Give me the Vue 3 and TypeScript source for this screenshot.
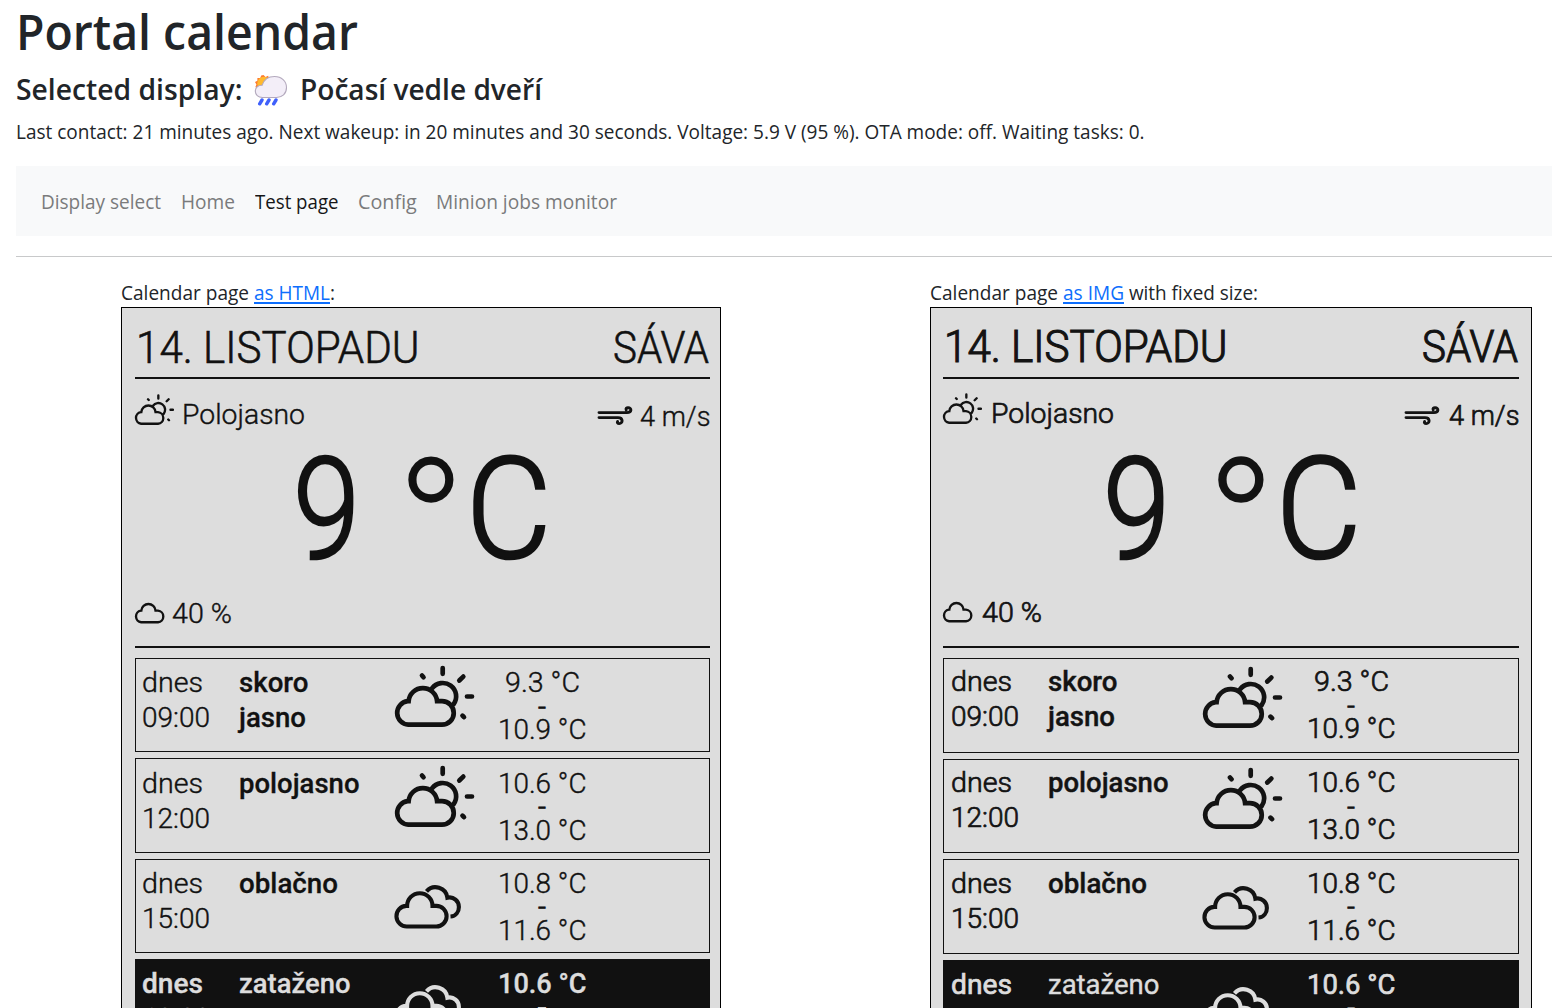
<script setup lang="ts">
import type { Directive } from 'vue'

// Sets a run of text to a given advance width.
const fit = (el: HTMLElement, width: number) => {
  el.style.display = 'inline-block'
  el.style.whiteSpace = 'pre'
  el.style.width = 'auto'
  el.style.transform = 'none'
  const natural = el.getBoundingClientRect().width
  el.style.width = `${width}px`
  el.style.transformOrigin = '0 50%'
  el.style.transform = `scaleX(${width / natural})`
}
const vFit: Directive<HTMLElement, number> = {
  mounted: (el, { value }) => fit(el, value),
}

const nav = [
  { label: 'Display select', width: 120, active: false },
  { label: 'Home', width: 54, active: false },
  { label: 'Test page', width: 83.5, active: true },
  { label: 'Config', width: 58.8, active: false },
  { label: 'Minion jobs monitor', width: 181, active: false },
]

interface Word { text: string; width: number }
interface Forecast {
  time: string
  summary: Word[]
  icon: 'sun' | 'clouds'
  low: Word
  high: Word
  now?: boolean
}
const forecast: Forecast[] = [
  { time: '09:00', summary: [{ text: 'skoro', width: 69.5 }, { text: 'jasno', width: 67 }], icon: 'sun', low: { text: '9.3 °C', width: 75 }, high: { text: '10.9 °C', width: 88.5 } },
  { time: '12:00', summary: [{ text: 'polojasno', width: 120.5 }], icon: 'sun', low: { text: '10.6 °C', width: 88.5 }, high: { text: '13.0 °C', width: 88.5 } },
  { time: '15:00', summary: [{ text: 'oblačno', width: 99 }], icon: 'clouds', low: { text: '10.8 °C', width: 88.5 }, high: { text: '11.6 °C', width: 88.5 } },
  { time: '18:00', summary: [{ text: 'zataženo', width: 111.5 }], icon: 'clouds', low: { text: '10.6 °C', width: 88.5 }, high: { text: '10.9 °C', width: 88.5 }, now: true },
]

const panels = [
  { kind: 'html', link: 'as HTML', linkWidth: 76, tail: ':', tailWidth: 5 },
  { kind: 'img', link: 'as IMG', linkWidth: 61, tail: ' with fixed size:', tailWidth: 134 },
]
</script>

<template>
  <main class="page">
    <h1><span v-fit="342">Portal calendar</span></h1>
    <h2>
      <span v-fit="226.500">Selected display:</span>
      <svg class="emoji" viewBox="0 0 34 32">
        <path fill="#fd7b2f" d="M9.5 1l2 2 2.6-1.2 1 2.6 3-.2-.4 3 2 2-2 8H5L3.500 14.600 1.400 13l1-2.500L1 8l2.400-1.300L3.400 4l2.800.1L7.200 1.500z" />
        <circle cx="10" cy="9.500" r="6.800" fill="#ffb92e" />
        <path fill="#f3eef8" stroke="#b3a9bd" stroke-width="1.100" d="M8.500 23.500C4 23.500 1.300 20.500 1.300 17S4 11 8.200 11.200C10 5.500 14.500 2.500 20.500 2.500 27.500 2.500 32.500 7 32.500 13.500S28 23.500 22.500 23.500Z" />
        <path stroke="#3f60fb" stroke-width="3.400" stroke-linecap="round" d="M8 26l-2.300 3.800M15 26l-2.300 3.800M22 26l-2.300 3.800" />
      </svg>
      <span v-fit="242">Počasí vedle dveří</span>
    </h2>
    <p class="status"><span v-fit="1128.500">Last contact: 21 minutes ago. Next wakeup: in 20 minutes and 30 seconds. Voltage: 5.9 V (95 %). OTA mode: off. Waiting tasks: 0.</span></p>
    <nav class="nav">
      <a v-for="n in nav" :key="n.label" v-fit="n.width" :class="{ active: n.active }">{{ n.label }}</a>
    </nav>
    <hr />
    <div class="panels">
      <section v-for="p in panels" :key="p.kind" :class="['panel', p.kind]">
        <div class="caption"><span v-fit="133">Calendar page </span><a v-fit="p.linkWidth">{{ p.link }}</a><span v-fit="p.tailWidth">{{ p.tail }}</span></div>
        <div class="calendar">
          <header class="date">
            <span v-fit="283.500">14. LISTOPADU</span><span v-fit="96">SÁVA</span>
          </header>
          <div class="current">
            <div class="conditions">
              <div class="sky">
                <svg class="sun-small" viewBox="2 2 80 62">
                  <path d="M16.300 61.500A11.800 11.800 0 0 1 15.600 38.200h1A14.300 14.300 0 0 1 45.100 38.200H50a11.700 11.700 0 0 1 0 23.300ZM40 25.400A13.400 13.400 0 0 1 61.500 41.400M50.700 5v6M67.300 16.500l4-4M75 33.500h5M70.500 53l1.500 1.500M30 12.500l1.500 1.500" />
                </svg>
                <span v-fit="123">Polojasno</span>
              </div>
              <div class="wind">
                <svg viewBox="0 0 38 22">
                  <path d="M3 8.600H31C36 8.600 36 3.800 32 3.600c-1.500 0-2.400 1-1.800 2.200M3 13.600H22c5.500 0 5 6 1.200 6-1.600 0-2.200-1.200-1.600-2.200" />
                </svg>
                <span v-fit="70.500">4 m/s</span>
              </div>
            </div>
            <div class="temperature"><span v-fit="67">9</span><span class="degree" v-fit="70">°</span><span v-fit="85.500">C</span></div>
            <div class="clouds">
              <svg viewBox="2 21 62 43">
                <path d="M16.300 61.500A11.800 11.800 0 0 1 15.600 38.200h1A14.300 14.300 0 0 1 45.100 38.200H50a11.700 11.700 0 0 1 0 23.300Z" />
              </svg>
              <span v-fit="60">40 %</span>
            </div>
          </div>
          <div class="rows">
            <article v-for="f in forecast" :key="f.time" :class="['row', { now: f.now }]">
              <div class="when"><span v-fit="61">dnes</span><span v-fit="68">{{ f.time }}</span></div>
              <div class="summary"><span v-for="w in f.summary" :key="w.text" v-fit="w.width">{{ w.text }}</span></div>
              <div class="icon">
                <svg v-if="f.icon === 'sun'" viewBox="0 0 84 68" stroke-width="4.700">
                  <path d="M16.300 61.700A11.800 11.800 0 0 1 15.600 38.200h1A14.300 14.300 0 0 1 45.100 38.200H50a11.750 11.750 0 0 1 0 23.500ZM40 25.400A13.400 13.400 0 0 1 61.500 41.400M50.700 5v5.800M67.300 17.500l4-3.900M75 33.500h5M70.500 52.700l1.500 1.500M30 12.500l1.500 1.700" />
                </svg>
                <svg v-else viewBox="-0.700 0.500 84 68" stroke-width="4.100">
                  <path d="M14.500 63A10.300 10.300 0 0 1 13.600 42.400h.8A12.700 12.700 0 0 1 39.800 42.400H43.600a10.300 10.300 0 0 1 0 20.600Z" />
                  <path class="butt" d="M33.800 27.800A12 12 0 0 1 54.700 34.200C61 32.800 66.200 37.500 66.200 43.400 66.200 48.500 63 52.700 57.800 53" />
                </svg>
              </div>
              <div class="range"><span v-fit="f.low.width">{{ f.low.text }}</span><span class="dash">-</span><span v-fit="f.high.width">{{ f.high.text }}</span></div>
            </article>
          </div>
        </div>
      </section>
    </div>
  </main>
</template>

<style>
html, body { margin: 0; height: 100%; overflow: hidden; background: #fff; }
</style>

<style scoped>
.page { box-sizing: border-box; width: 1552px; height: 1008px; overflow: hidden; padding-left: 16px; color: #212529; font: 400 20px/30px "Open Sans", "Noto Sans", sans-serif; }
h1, h2, p { margin: 0; }
h1 { height: 68px; font-size: 49px; line-height: 62px; font-weight: 600; }
h2 { display: flex; height: 44px; font-size: 29px; line-height: 41px; font-weight: 600; }
.emoji { width: 34px; height: 32px; margin: 5.500px 12px 0 11.500px; fill: none; }
.status { height: 54px; font-size: 19.500px; line-height: 39px; }
.nav { display: flex; gap: 19.800px; height: 70px; padding-left: 25px; background: #f8f9fa; color: #7a7b7c; font-size: 19.500px; line-height: 72px; }
.nav .active { color: #151617; }
hr { height: 1px; margin: 20px 0 0; border: 0; background: #c8c9ca; }
.panels { display: flex; padding: 20px 0 0 105px; gap: 209px; }
.caption { height: 30px; font-size: 19.500px; line-height: 31px; }
.caption a { color: #0d6efd; text-decoration: underline; text-decoration-thickness: 2px; text-underline-offset: 2px; }

.calendar { box-sizing: border-box; width: 600px; height: 1000px; padding: 0 10px 0 13px; border: 1px solid #000; background: #ddd; color: #111; font: 300 28px/35px Roboto, sans-serif; }
.calendar span { -webkit-text-stroke: 0.014em currentColor; }
.date { display: flex; justify-content: space-between; box-sizing: border-box; height: 71px; padding-left: 1px; border-bottom: 2px solid #111; font-size: 43.500px; line-height: 82px; }
.date span:last-child { margin-right: 1px; }
.current { box-sizing: border-box; height: 269px; border-bottom: 2px solid #111; }
.conditions { display: flex; justify-content: space-between; height: 60px; }
.sky, .wind, .clouds { display: flex; }
.sky { gap: 8px; padding-top: 18px; }
.sun-small { width: 40px; height: 31px; margin: -3px 0 0 -1px; stroke-width: 4.700; }
.wind { gap: 6px; padding-top: 20px; }
.wind svg { width: 38px; height: 22px; margin-top: 5px; stroke-width: 2.900; }
svg { display: block; flex: none; }
.calendar svg { fill: none; stroke: currentColor; stroke-linecap: round; }
.temperature { display: flex; height: 140px; padding-left: 158px; font-size: 140.500px; line-height: 143px; }
.calendar .temperature span { -webkit-text-stroke-width: 0.018em; }
.temperature .degree { margin: 12px 0 0 36px; font-size: 184px; line-height: 155px; font-weight: 100; }
.clouds { gap: 7px; padding-top: 17px; }
.clouds svg { width: 31px; height: 21.500px; margin: 6px 0 0 -1px; stroke-width: 4.700; }
.rows { display: flex; flex-direction: column; gap: 6px; padding-top: 10px; }
.row { flex: none; box-sizing: border-box; display: flex; height: 94.350px; border: 1px solid #111; }
.when { width: 97px; box-sizing: border-box; padding: 6.200px 0 0 5.500px; }
.summary { width: 155px; box-sizing: border-box; padding: 6.200px 0 0 5.500px; font-weight: 500; }
.calendar .summary span { -webkit-text-stroke-width: 0.3px; }
.when, .summary { display: flex; flex-direction: column; align-items: flex-start; }
.icon { width: 84px; padding: 4px 2px 0 4px; }
.icon svg { width: 84px; height: 68px; }
.butt { stroke-linecap: butt; }
.range { display: flex; flex-direction: column; align-items: center; width: 128px; padding-top: 12.200px; line-height: 23.500px; }
.calendar .dash { -webkit-text-stroke-width: 0.8px; }
.now { background: #111; color: #ddd; font-weight: 500; }

.img .calendar { width: 602px; padding-left: 12px; padding-right: 12px; color: #131313; }
.img .calendar span { -webkit-text-stroke-width: 0.026em; }
.img .calendar .temperature span { -webkit-text-stroke-width: 0.019em; }
.img .calendar .summary span { -webkit-text-stroke-width: 0.4px; }
.img .date { padding-left: 1px; line-height: 79px; }
.img .sky { gap: 9px; padding-top: 16.500px; }
.img .wind { padding-top: 19px; }
.img .wind svg { margin: 6px 2px 0 -4px; }
.img .temperature { padding-left: 160px; }
.img .clouds { gap: 9px; padding-top: 16px; }
.img .rows { padding-top: 9.800px; }
.img .row { height: 94.800px; }
.img .when { padding: 5.500px 0 0 7px; }
.img .summary { padding: 5.500px 0 0 6.500px; }
.img .icon { padding-top: 5px; }
.img .range { padding: 11.500px 0 0 1px; }
.img .now > div { font-weight: 400; }
</style>
